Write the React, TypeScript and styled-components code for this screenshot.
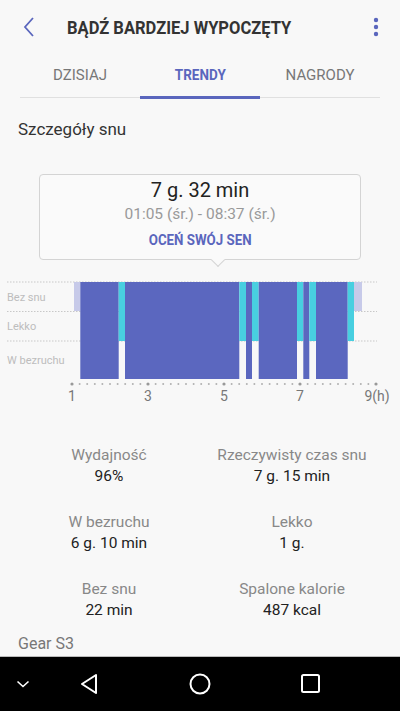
import styled, { createGlobalStyle } from "styled-components";

const GlobalStyle = createGlobalStyle`
  html, body {
    margin: 0;
    padding: 0;
    background: #f8f8f8;
    font-family: Roboto, "Noto Sans", sans-serif;
  }
`;

const BLUE = "#5a66bd";

const Screen = styled.div`
  width: 400px;
  height: 711px;
  display: flex;
  flex-direction: column;
  background: #f8f8f8;
  overflow: hidden;
`;

const Header = styled.header`
  height: 54px;
  display: flex;
  align-items: center;
  padding: 0 21px 0 22px;
`;

const BackButton = styled.div`
  width: 45px;
  display: flex;
  align-items: center;
`;

const Title = styled.h1`
  flex: 1;
  margin: 0;
  font-size: 19px;
  font-weight: 700;
  color: #333;
  white-space: nowrap;
  transform: scaleX(0.87);
  transform-origin: left center;
`;

const Tabs = styled.nav`
  margin: 0 20px;
  height: 43px;
  display: flex;
  border-bottom: 1px solid #e0e0e0;
`;

const Tab = styled.div<{ active?: boolean }>`
  flex: 1;
  display: flex;
  align-items: center;
  justify-content: center;
  font-size: 15px;
  font-weight: ${p => (p.active ? 700 : 400)};
  color: ${p => (p.active ? BLUE : "#777")};
  border-bottom: 3px solid ${p => (p.active ? BLUE : "transparent")};
  margin-bottom: -2px;

  span {
    display: inline-block;
    transform: ${p => (p.active ? "scaleX(0.9)" : "none")};
  }
`;

const SectionTitle = styled.h2`
  margin: 0;
  padding: 21px 18px 0;
  height: 55px;
  box-sizing: border-box;
  font-size: 17px;
  font-weight: 400;
  color: #333;
`;

const TipWrap = styled.div`
  margin: 21px 39px 0;
  position: relative;
`;

const Tip = styled.div`
  height: 86px;
  box-sizing: border-box;
  border: 1px solid #d4d4d4;
  border-radius: 4px;
  background: #fafafa;
  display: flex;
  flex-direction: column;
  align-items: center;
  padding-top: 3px;
`;

const TipArrow = styled.div`
  position: absolute;
  left: 174px;
  bottom: -5px;
  width: 9px;
  height: 9px;
  background: #fafafa;
  border-right: 1px solid #d4d4d4;
  border-bottom: 1px solid #d4d4d4;
  transform: rotate(45deg);
`;

const TipDuration = styled.div`
  font-size: 20px;
  color: #222;
  line-height: 24px;
`;

const TipRange = styled.div`
  font-size: 15.5px;
  color: #999;
  line-height: 24px;
`;

const TipAction = styled.div`
  font-size: 14px;
  font-weight: 700;
  color: ${BLUE};
  line-height: 28px;
  transform: scaleX(0.95);
`;

const Chart = styled.svg`
  display: block;
  margin-top: 7px;
`;

const Stats = styled.div`
  margin-top: 38px;
  padding: 0 18px;
  display: grid;
  grid-template-columns: 1fr 1fr;
  row-gap: 25px;
`;

const Stat = styled.div<{ right?: boolean }>`
  display: flex;
  flex-direction: column;
  align-items: center;
  transform: translateX(${p => (p.right ? "1px" : "0")});
`;

const StatLabel = styled.span`
  font-size: 15.5px;
  color: #888;
  line-height: 21px;
`;

const StatValue = styled.span`
  font-size: 15.5px;
  color: #222;
  line-height: 21px;
`;

const Device = styled.div`
  margin-top: auto;
  padding: 0 18px 2px;
  font-size: 16px;
  color: #777;
  line-height: 20px;
`;

const NavBar = styled.div`
  height: 54px;
  background: #000;
  border-top: 1px solid #bbb;
  display: flex;
  align-items: center;
  position: relative;
`;

const NavSlot = styled.div<{ x: number }>`
  position: absolute;
  left: ${p => p.x}px;
  top: 0;
  bottom: 0;
  display: flex;
  align-items: center;
  transform: translateX(-50%);
`;

type Seg = { a: number; b: number; kind: "dark" | "cyan" | "lav" };

const segs: Seg[] = [
  { a: 74, b: 80.3, kind: "lav" },
  { a: 80.3, b: 118.7, kind: "dark" },
  { a: 118.7, b: 125, kind: "cyan" },
  { a: 125, b: 239.3, kind: "dark" },
  { a: 239.3, b: 246, kind: "cyan" },
  { a: 246, b: 252, kind: "dark" },
  { a: 252, b: 258.7, kind: "cyan" },
  { a: 258.7, b: 297, kind: "dark" },
  { a: 297, b: 303.3, kind: "cyan" },
  { a: 303.3, b: 309.3, kind: "dark" },
  { a: 309.3, b: 316, kind: "cyan" },
  { a: 316, b: 347.7, kind: "dark" },
  { a: 347.7, b: 354, kind: "cyan" },
  { a: 354, b: 362, kind: "lav" },
];

const colors = { dark: "#5b67bf", cyan: "#48cfe0", lav: "#c7cae9" };
const bottoms = { dark: 112, cyan: 74, lav: 44 };

function SleepChart() {
  const top = 15;
  const rows = [15, 44.5, 74];
  const dots: number[] = [];
  for (let i = 0; i <= 40; i++) dots.push(72 + i * 7.6);
  return (
    <Chart width="400" height="140" viewBox="0 0 400 140">
      {rows.map(y => (
        <line key={y} x1="7" x2="377" y1={y} y2={y} stroke="#c8c8c8" strokeWidth="1" strokeDasharray="1.5 1.5" />
      ))}
      <g fontFamily="Roboto, sans-serif" fontSize="11" fill="#bdbdbd">
        <text x="7" y="34">Bez snu</text>
        <text x="7" y="63">Lekko</text>
        <text x="7" y="97">W bezruchu</text>
      </g>
      {segs.map((s, i) => (
        <rect key={i} x={s.a} y={top} width={s.b - s.a} height={bottoms[s.kind] - top} fill={colors[s.kind]} />
      ))}
      {dots.map((x, i) => (
        <circle key={i} cx={x} cy="117" r={i % 10 === 0 ? 1.6 : 1} fill={i % 10 === 0 ? "#999" : "#b0b0b0"} />
      ))}
      <g fontFamily="Roboto, sans-serif" fontSize="14" fill="#777" textAnchor="middle">
        <text x="72" y="134">1</text>
        <text x="148" y="134">3</text>
        <text x="224" y="134">5</text>
        <text x="300" y="134">7</text>
        <text x="377" y="134">9(h)</text>
      </g>
    </Chart>
  );
}

const stats = [
  ["Wydajność", "96%"],
  ["Rzeczywisty czas snu", "7 g. 15 min"],
  ["W bezruchu", "6 g. 10 min"],
  ["Lekko", "1 g."],
  ["Bez snu", "22 min"],
  ["Spalone kalorie", "487 kcal"],
];

export default function App() {
  return (
    <>
      <GlobalStyle />
      <Screen>
        <Header>
          <BackButton>
            <svg width="14" height="20" viewBox="0 0 14 20">
              <path d="M11 1 L3 10 L11 19" fill="none" stroke={BLUE} strokeWidth="1.8" />
            </svg>
          </BackButton>
          <Title>BĄDŹ BARDZIEJ WYPOCZĘTY</Title>
          <svg width="6" height="20" viewBox="0 0 6 20">
            <circle cx="3" cy="3" r="2.2" fill={BLUE} />
            <circle cx="3" cy="10" r="2.2" fill={BLUE} />
            <circle cx="3" cy="17" r="2.2" fill={BLUE} />
          </svg>
        </Header>
        <Tabs>
          <Tab><span>DZISIAJ</span></Tab>
          <Tab active><span>TRENDY</span></Tab>
          <Tab><span>NAGRODY</span></Tab>
        </Tabs>
        <SectionTitle>Szczegóły snu</SectionTitle>
        <TipWrap>
          <Tip>
            <TipDuration>7 g. 32 min</TipDuration>
            <TipRange>01:05 (śr.) - 08:37 (śr.)</TipRange>
            <TipAction>OCEŃ SWÓJ SEN</TipAction>
          </Tip>
          <TipArrow />
        </TipWrap>
        <SleepChart />
        <Stats>
          {stats.map(([l, v], i) => (
            <Stat key={l} right={i % 2 === 1}>
              <StatLabel>{l}</StatLabel>
              <StatValue>{v}</StatValue>
            </Stat>
          ))}
        </Stats>
        <Device>Gear S3</Device>
        <NavBar>
          <NavSlot x={23}>
            <svg width="14" height="8" viewBox="0 0 14 8">
              <path d="M1.5 1.5 L7 6.5 L12.5 1.5" fill="none" stroke="#fff" strokeWidth="1.6" />
            </svg>
          </NavSlot>
          <NavSlot x={89}>
            <svg width="20" height="22" viewBox="0 0 20 22">
              <path d="M17 2 L3 11 L17 20 Z" fill="none" stroke="#fff" strokeWidth="2" strokeLinejoin="round" />
            </svg>
          </NavSlot>
          <NavSlot x={200}>
            <svg width="24" height="24" viewBox="0 0 24 24">
              <circle cx="12" cy="12" r="9.5" fill="none" stroke="#fff" strokeWidth="2" />
            </svg>
          </NavSlot>
          <NavSlot x={311}>
            <svg width="22" height="22" viewBox="0 0 22 22">
              <rect x="2" y="2" width="17" height="17" rx="1.5" fill="none" stroke="#fff" strokeWidth="2" />
            </svg>
          </NavSlot>
        </NavBar>
      </Screen>
    </>
  );
}
